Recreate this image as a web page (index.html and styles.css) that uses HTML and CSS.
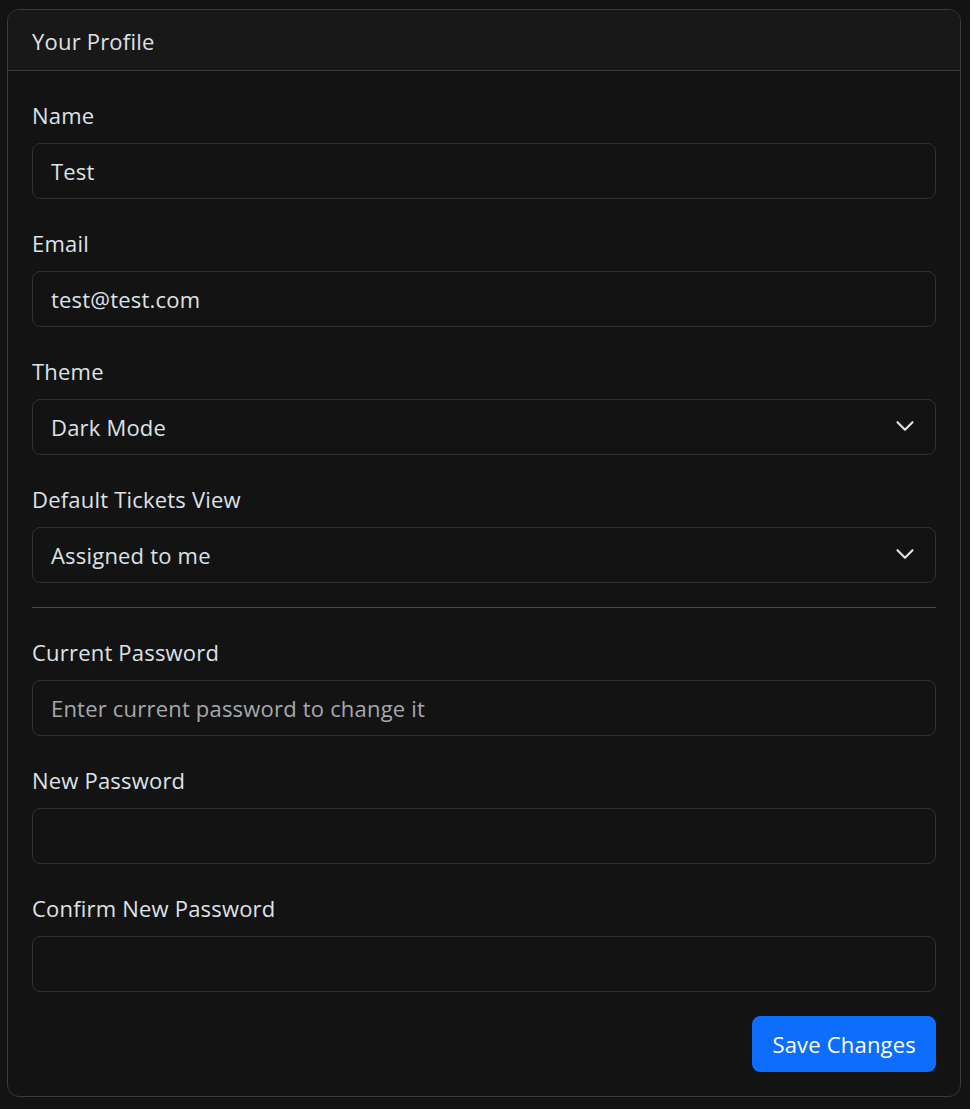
FILE: index.html
```html
<!DOCTYPE html>
<html lang="en">
<head>
<meta charset="utf-8">
<title>Your Profile</title>
<link rel="stylesheet" href="styles.css">
</head>
<body>
<div class="card">
  <div class="card-header">Your Profile</div>
  <form class="card-body">
    <div class="group">
      <label class="label" for="name">Name</label>
      <input class="control" id="name" type="text" value="Test">
    </div>
    <div class="group">
      <label class="label" for="email">Email</label>
      <input class="control" id="email" type="email" value="test@test.com">
    </div>
    <div class="group">
      <label class="label" for="theme">Theme</label>
      <div class="select-wrap">
        <select class="control select" id="theme">
          <option>Dark Mode</option>
          <option>Light Mode</option>
        </select>
        <svg class="chevron" viewBox="0 0 16 16" width="20" height="20"><path d="m2 5 6 6 6-6" fill="none" stroke="#dee2e6" stroke-width="1.7" stroke-linecap="round" stroke-linejoin="round"/></svg>
      </div>
    </div>
    <div class="group group-last">
      <label class="label" for="view">Default Tickets View</label>
      <div class="select-wrap">
        <select class="control select" id="view">
          <option>Assigned to me</option>
          <option>All tickets</option>
        </select>
        <svg class="chevron" viewBox="0 0 16 16" width="20" height="20"><path d="m2 5 6 6 6-6" fill="none" stroke="#dee2e6" stroke-width="1.7" stroke-linecap="round" stroke-linejoin="round"/></svg>
      </div>
    </div>
    <hr class="divider">
    <div class="group">
      <label class="label" for="cur">Current Password</label>
      <input class="control" id="cur" type="password" placeholder="Enter current password to change it">
    </div>
    <div class="group">
      <label class="label" for="new">New Password</label>
      <input class="control" id="new" type="password">
    </div>
    <div class="group group-last">
      <label class="label" for="conf">Confirm New Password</label>
      <input class="control" id="conf" type="password">
    </div>
    <div class="actions">
      <button class="btn" type="button">Save Changes</button>
    </div>
  </form>
</div>
</body>
</html>
```
FILE: styles.css
```css
* { box-sizing: border-box; }
html, body { background: #131313; }
body {
  margin: 0;
  padding: 9px 9px 12px 7px;
  font-family: "Open Sans", "Noto Sans", sans-serif;
  font-size: 22px;
  letter-spacing: 0.2px;
  line-height: 30px;
  color: #dee2e6;
}
.card {
  border: 1px solid #3b3b3b;
  border-radius: 12px;
  background: #131313;
  overflow: hidden;
}
.card-header {
  padding: 16px 24px 14px;
  background: #181818;
  border-bottom: 1px solid #3b3b3b;
  line-height: 30px;
}
.card-body {
  display: flex;
  flex-direction: column;
  padding: 32px 24px 24px;
  margin: 0;
}
.group {
  display: flex;
  flex-direction: column;
  margin-bottom: 32px;
}
.group-last { margin-bottom: 24px; }
.label {
  display: block;
  line-height: 24px;
  padding-bottom: 6px;
  margin-bottom: 10px;
}
.control {
  display: block;
  width: 100%;
  height: 56px;
  padding: 12px 18px;
  font: inherit;
  letter-spacing: inherit;
  line-height: 30px;
  color: #dee2e6;
  background: #131313;
  border: 1px solid #313131;
  border-radius: 8px;
  outline: none;
}
.control::placeholder { color: #a5a9ad; opacity: 1; }
.select-wrap { position: relative; }
.select {
  appearance: none;
  -webkit-appearance: none;
  padding-right: 56px;
}
.chevron {
  position: absolute;
  right: 21px;
  top: 17px;
  pointer-events: none;
}
.divider {
  margin: 0 0 32px;
  border: 0;
  border-top: 1px solid #4a4a4a;
}
.actions {
  display: flex;
  justify-content: flex-end;
}
.btn {
  height: 56px;
  padding: 12px 19px;
  font: inherit;
  letter-spacing: inherit;
  line-height: 30px;
  color: #fff;
  background: #0d6efd;
  border: 1px solid #0d6efd;
  border-radius: 8px;
}
```
